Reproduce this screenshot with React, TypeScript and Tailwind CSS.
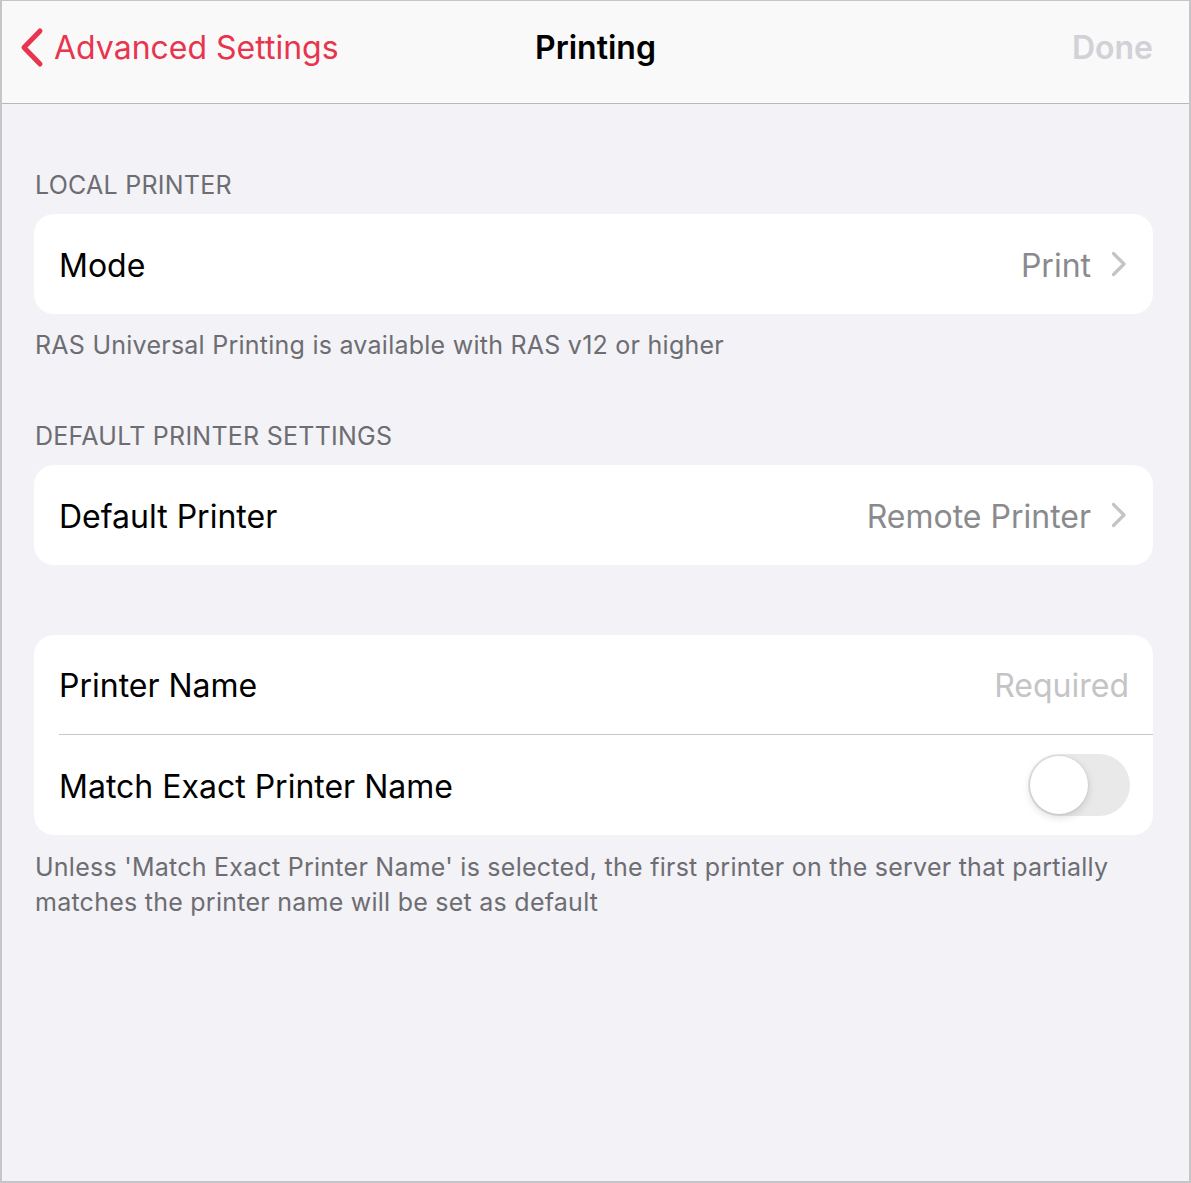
const font = { fontFamily: 'Inter, "Noto Sans", sans-serif' };

function Chevron() {
  return (
    <svg width="16" height="26" viewBox="0 0 16 26" fill="none">
      <path d="M2.5 2.5 L13 13 L2.5 23.5" stroke="#c4c4c7" strokeWidth="3.2" strokeLinecap="round" strokeLinejoin="round" />
    </svg>
  );
}

function SectionHeader({ title }: { title: string }) {
  return <div className="px-[33px] pb-[14px] text-[25px] leading-[30px] tracking-[0.25px] text-[#6d6d72]">{title}</div>;
}

function NavRow({ label, value }: { label: string; value: string }) {
  return (
    <div className="flex h-[100px] items-center justify-between pl-[25px] pr-[26px]">
      <span className="pt-[3px] text-[32px] text-black">{label}</span>
      <div className="flex items-center gap-[20px]">
        <span className="pt-[3px] text-[32px] text-[#8a8a8e]">{value}</span>
        <Chevron />
      </div>
    </div>
  );
}

export default function App() {
  return (
    <div className="h-[1183px] w-[1191px] overflow-hidden" style={font}>
      <div className="flex h-full flex-col border-2 border-t border-[#c6c6c8] bg-[#f2f2f7]">
        {/* nav bar */}
        <div className="relative flex h-[103px] shrink-0 items-center border-b border-[#b8b8bb] bg-[#f9f9f9] pb-[9px]">
          <div className="flex items-center pl-[16px] text-[#e8354d]">
            <svg width="30" height="44" viewBox="0 0 30 44" fill="none">
              <path d="M22 5 L6 21.5 L22 38" stroke="currentColor" strokeWidth="5" strokeLinecap="round" strokeLinejoin="round" />
            </svg>
            <span className="ml-[6px] text-[32px] leading-none">Advanced Settings</span>
          </div>
          <div className="absolute left-1/2 top-[27px] -translate-x-1/2 text-[32px] font-semibold leading-[40px] text-black">Printing</div>
          <div className="ml-auto pr-[36px] text-[32px] font-semibold text-[#d1d1d6]">Done</div>
        </div>

        <div className="pt-[66px]">
          <SectionHeader title="LOCAL PRINTER" />
          <div className="ml-[32px] mr-[36px] overflow-hidden rounded-[20px] bg-white">
            <NavRow label="Mode" value="Print" />
          </div>
          <div className="px-[33px] pt-[14px] text-[25px] leading-[35px] tracking-[0.25px] text-[#6d6d72]">
            RAS Universal Printing is available with RAS v12 or higher
          </div>

          <div className="pt-[58px]">
            <SectionHeader title="DEFAULT PRINTER SETTINGS" />
          </div>
          <div className="ml-[32px] mr-[36px] overflow-hidden rounded-[20px] bg-white">
            <NavRow label="Default Printer" value="Remote Printer" />
          </div>

          <div className="ml-[32px] mr-[36px] mt-[70px] overflow-hidden rounded-[20px] bg-white">
            <div className="flex h-[99px] items-center justify-between pl-[25px] pr-[24px] pt-[2px]">
              <span className="text-[32px] text-black">Printer Name</span>
              <span className="text-[32px] text-[#c4c4c6]">Required</span>
            </div>
            <div className="ml-[25px] h-px bg-[#c8c8cc]" />
            <div className="flex h-[100px] items-center justify-between pl-[25px] pr-[23px]">
              <span className="pt-[3px] text-[32px] text-black">Match Exact Printer Name</span>
              <div className="relative h-[62px] w-[102px] rounded-full bg-[#e9e9ea]">
                <div className="absolute left-[2px] top-[2px] h-[58px] w-[58px] rounded-full bg-white shadow-[0_3px_8px_rgba(0,0,0,0.15),0_0_0_1px_rgba(0,0,0,0.04)]" />
              </div>
            </div>
          </div>
          <div className="px-[33px] pt-[15px] text-[25px] leading-[35px] tracking-[0.25px] text-[#6d6d72]">
            Unless 'Match Exact Printer Name' is selected, the first printer on the server that partially matches the printer name will be set as default
          </div>
        </div>
      </div>
    </div>
  );
}
